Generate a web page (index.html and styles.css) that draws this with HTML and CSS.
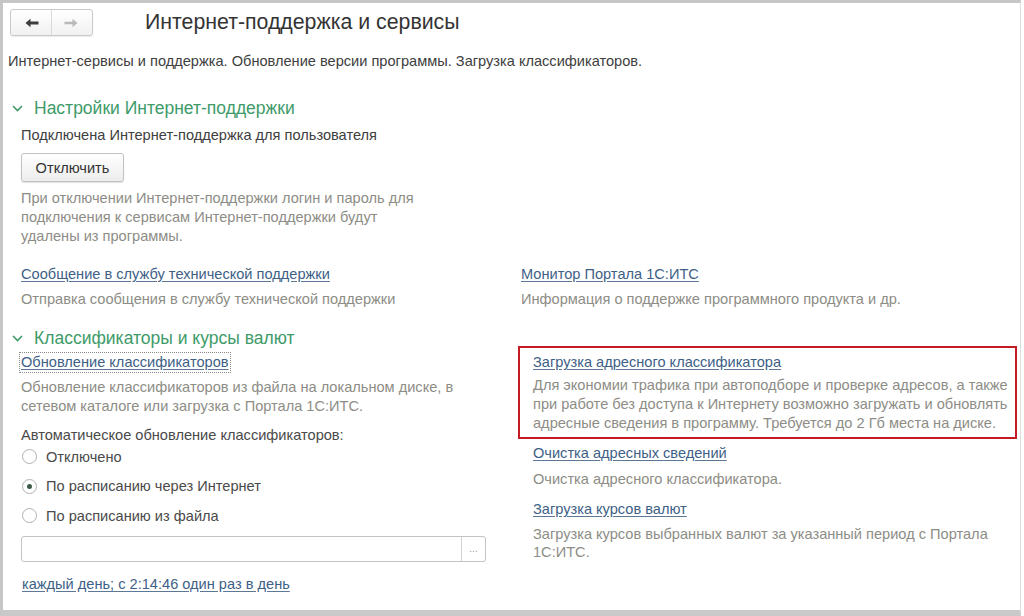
FILE: index.html
```html
<!DOCTYPE html>
<html lang="ru">
<head>
<meta charset="utf-8">
<title>Интернет-поддержка и сервисы</title>
<link rel="stylesheet" href="styles.css">
</head>
<body>
<div class="window">
  <div class="topbar">
    <div class="nav">
      <button class="nav-btn back" type="button">
        <svg width="14" height="10" viewBox="0 0 14 10"><path d="M0.5 5 L5.5 0.8 L5.5 3.6 L13.5 3.6 L13.5 6.4 L5.5 6.4 L5.5 9.2 Z" fill="#3c3c3c"/></svg>
      </button>
      <button class="nav-btn fwd" type="button">
        <svg width="14" height="10" viewBox="0 0 14 10"><path d="M13.5 5 L8.5 0.8 L8.5 3.8 L0.5 3.8 L0.5 6.2 L8.5 6.2 L8.5 9.2 Z" fill="#b9b9b9"/></svg>
      </button>
    </div>
    <h1 class="title">Интернет-поддержка и сервисы</h1>
  </div>

  <p class="subtitle">Интернет-сервисы и поддержка. Обновление версии программы. Загрузка классификаторов.</p>

  <section class="group g1">
    <h2 class="group-head">
      <svg class="chev" width="11" height="7" viewBox="0 0 11 7"><polyline points="1,1 5.5,5.5 10,1" fill="none" stroke="#3e9b69" stroke-width="1.6"/></svg>
      Настройки Интернет-поддержки
    </h2>
    <div class="group-body">
      <p class="status">Подключена Интернет-поддержка для пользователя</p>
      <button class="btn" type="button">Отключить</button>
      <p class="hint hint-off">При отключении Интернет-поддержки логин и пароль для<br>подключения к сервисам Интернет-поддержки будут<br>удалены из программы.</p>
      <div class="cols cols-1">
        <div class="col">
          <a class="link" href="#">Сообщение в службу технической поддержки</a>
          <p class="hint">Отправка сообщения в службу технической поддержки</p>
        </div>
        <div class="col col-r1">
          <a class="link" href="#">Монитор Портала 1С:ИТС</a>
          <p class="hint">Информация о поддержке программного продукта и др.</p>
        </div>
      </div>
    </div>
  </section>

  <section class="group g2">
    <h2 class="group-head">
      <svg class="chev" width="11" height="7" viewBox="0 0 11 7"><polyline points="1,1 5.5,5.5 10,1" fill="none" stroke="#3e9b69" stroke-width="1.6"/></svg>
      Классификаторы и курсы валют
    </h2>
    <div class="cols cols-2">
      <div class="col col-l2">
        <a class="link focus" href="#">Обновление классификаторов</a>
        <p class="hint hint-upd">Обновление классификаторов из файла на локальном диске, в<br>сетевом каталоге или загрузка с Портала 1С:ИТС.</p>
        <p class="label">Автоматическое обновление классификаторов:</p>
        <ul class="radios">
          <li class="radio"><span class="dot"></span>Отключено</li>
          <li class="radio on"><span class="dot"></span>По расписанию через Интернет</li>
          <li class="radio"><span class="dot"></span>По расписанию из файла</li>
        </ul>
        <div class="field">
          <span class="field-input"></span>
          <span class="field-btn">...</span>
        </div>
        <a class="link sched" href="#">каждый день; с 2:14:46 один раз в день</a>
      </div>
      <div class="col col-r2">
        <div class="highlight">
          <a class="link" href="#">Загрузка адресного классификатора</a>
          <p class="hint hint-box">Для экономии трафика при автоподборе и проверке адресов, а также<br>при работе без доступа к Интернету возможно загружать и обновлять<br>адресные сведения в программу. Требуется до 2 Гб места на диске.</p>
        </div>
        <div class="item item-clean">
          <a class="link" href="#">Очистка адресных сведений</a>
          <p class="hint">Очистка адресного классификатора.</p>
        </div>
        <div class="item item-rates">
          <a class="link" href="#">Загрузка курсов валют</a>
          <p class="hint hint-rates">Загрузка курсов выбранных валют за указанный период с Портала<br>1С:ИТС.</p>
        </div>
      </div>
    </div>
  </section>
</div>
</body>
</html>
```

FILE: styles.css
```css
* { box-sizing: border-box; }

html, body {
  margin: 0;
  padding: 0;
  background: #ffffff;
}

body {
  font-family: "Liberation Sans", Arial, sans-serif;
  font-size: 14.6px;
  color: #3a3a3a;
  width: 1024px;
  height: 616px;
  overflow: hidden;
}

p, h1, h2, ul { margin: 0; padding: 0; }

.window {
  width: 1021px;
  height: 616px;
  border-top: 3px solid #c6c6c6;
  border-left: 3px solid #c6c6c6;
  border-bottom: 6px solid #c9c9c9;
  border-right: 1px solid #dedede;
  overflow: hidden;
}

/* top bar */
.topbar {
  display: flex;
  align-items: center;
  margin-top: 6px;
  margin-left: 7px;
  height: 27px;
}

.nav {
  display: flex;
  width: 83px;
  height: 27px;
  border: 1px solid #c9c9c9;
  border-radius: 3px;
  background: linear-gradient(#ffffff, #f1f1f1);
  box-shadow: 0 1px 1px rgba(0,0,0,0.08);
}

.nav-btn {
  flex: 1;
  border: 0;
  padding: 0;
  margin: 0;
  background: transparent;
  display: flex;
  align-items: center;
  justify-content: center;
}

.nav-btn.back { border-right: 1px solid #dadada; padding-left: 2px; }
.nav-btn.fwd { padding-right: 2px; }

.title {
  margin-left: 52px;
  font-size: 21.3px;
  font-weight: normal;
  color: #333333;
  line-height: 27px;
}

.subtitle {
  margin-top: 16px;
  margin-left: 5px;
  line-height: 19px;
  color: #404040;
}

/* groups */
.group-head {
  display: flex;
  align-items: center;
  font-weight: normal;
  font-size: 17.5px;
  color: #3e9b69;
  margin-left: 9px;
}

.chev { margin-right: 11px; margin-top: 1px; }

.g1 .group-head {
  margin-top: 26px;
  line-height: 22px;
}

.group-body {
  padding-left: 18px;
}

.status {
  margin-top: 7px;
  line-height: 19px;
  color: #404040;
}

.btn {
  display: block;
  margin-top: 8px;
  width: 103px;
  height: 29px;
  border: 1px solid #c2c2c2;
  border-radius: 3px;
  background: linear-gradient(#ffffff, #ededed);
  box-shadow: 0 1px 1px rgba(0,0,0,0.12);
  font-family: "Liberation Sans", Arial, sans-serif;
  font-size: 14.6px;
  color: #333333;
  padding: 0;
}

.hint {
  color: #8d8d86;
  line-height: 19px;
}

.hint-off { margin-top: 7px; }

.link {
  display: inline-block;
  color: #3e5f86;
  text-decoration: underline;
  text-decoration-color: #5d7797;
  text-underline-offset: 2px;
  line-height: 19px;
}

.cols {
  display: grid;
  grid-template-columns: 497px 1fr;
}

.col { display: flex; flex-direction: column; align-items: flex-start; }

.cols-1 { margin-top: 19px; }
.cols-1 .hint { margin-top: 6px; }
.col-r1 { padding-left: 3px; }

.g2 .group-head {
  margin-top: 21px;
  line-height: 16px;
}

.cols-2 { padding-left: 18px; }

.col-l2 { padding-top: 7px; }

.focus {
  outline: 1px dotted #8a8a8a;
  outline-offset: 0px;
  padding: 0 1px;
  margin-left: -1px;
}

.hint-upd { margin-top: 6px; }

.label {
  margin-top: 11px;
  line-height: 16px;
  color: #4a4a4a;
}

.radios {
  list-style: none;
  margin-top: -1px;
}

.radio {
  display: flex;
  align-items: center;
  height: 29.5px;
  color: #4a4a4a;
  padding-left: 1px;
}

.dot {
  width: 15px;
  height: 15px;
  border-radius: 50%;
  border: 1px solid #b1b1b1;
  background: #ffffff;
  margin-right: 9px;
  display: flex;
  align-items: center;
  justify-content: center;
}

.radio.on .dot::after {
  content: "";
  width: 5px;
  height: 5px;
  border-radius: 50%;
  background: #3a5a48;
}

.field {
  display: flex;
  margin-top: 5px;
  width: 465px;
  height: 26px;
  border: 1px solid #c3c3c3;
  border-radius: 3px;
  background: #ffffff;
}

.field-input { flex: 1; }

.field-btn {
  width: 24px;
  border-left: 1px solid #d2d2d2;
  color: #9a9a9a;
  font-size: 10px;
  line-height: 24px;
  text-align: center;
}

.sched {
  margin-top: 13px;
  margin-left: 1px;
}

.col-r2 { align-items: stretch; }

.highlight {
  width: 499px;
  border: 2px solid #c61a22;
  padding: 5px 4px 4px 13px;
  display: flex;
  flex-direction: column;
  align-items: flex-start;
}

.hint-box { margin-top: 4px; }

.item {
  padding-left: 15px;
  display: flex;
  flex-direction: column;
  align-items: flex-start;
}

.item-clean { margin-top: 5px; }
.item-clean .hint { margin-top: 7px; }

.item-rates { margin-top: 11px; }
.hint-rates { margin-top: 6px; line-height: 18px; }
```
